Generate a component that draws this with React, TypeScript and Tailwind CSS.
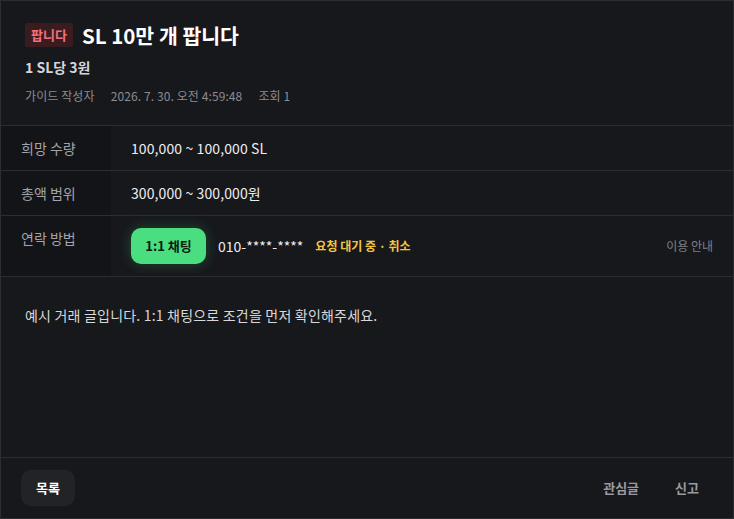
import React from "react";

export default function App() {
  return (
    <div
      className="w-[734px] h-[519px] bg-[#17181c] text-white border border-[#2c2d31] flex flex-col"
      style={{ fontFamily: '"Noto Sans CJK KR", "Noto Sans", sans-serif' }}
    >
      <div className="px-6 pt-[22px] pb-[21px] border-b border-[#2c2d31]">
        <div className="flex items-center gap-[9px]">
          <span className="h-6 px-[6px] flex items-center rounded-[2px] bg-[#3a1c20] text-[#f0717a] text-[13px] font-bold">
            팝니다
          </span>
          <h1 className="text-[20.5px] font-bold leading-none text-white">SL 10만 개 팝니다</h1>
        </div>
        <div className="mt-[11px] text-[14px] font-bold text-[#d6d6d8] leading-[18px]">1 SL당 3원</div>
        <div className="mt-[12px] flex gap-4 text-[12px] tracking-[0.1px] text-[#8b8c91] leading-[16px]">
          <span>가이드 작성자</span>
          <span>2026. 7. 30. 오전 4:59:48</span>
          <span>조회 1</span>
        </div>
      </div>

      <div className="flex border-b border-[#2c2d31] h-[45px]">
        <div className="w-[110px] bg-[#131417] flex items-center pl-5 text-[14px] text-[#a3a4a8]">희망 수량</div>
        <div className="flex-1 flex items-center pl-5 text-[14px] tracking-[0.1px] text-[#eeeeef]">100,000 ~ 100,000 SL</div>
      </div>
      <div className="flex border-b border-[#2c2d31] h-[45px]">
        <div className="w-[110px] bg-[#131417] flex items-center pl-5 text-[14px] text-[#a3a4a8]">총액 범위</div>
        <div className="flex-1 flex items-center pl-5 text-[14px] tracking-[0.1px] text-[#eeeeef]">300,000 ~ 300,000원</div>
      </div>
      <div className="flex border-b border-[#2c2d31] h-[61px]">
        <div className="w-[110px] bg-[#131417] pl-5 pt-[12px] text-[14px] text-[#a3a4a8]">연락 방법</div>
        <div className="flex-1 flex items-center pl-5 pr-5">
          <button className="h-9 w-[75px] rounded-[10px] bg-[#4ade80] text-[#0c1a10] text-[13px] font-bold shadow-[0_0_14px_rgba(74,222,128,0.25)]">
            1:1 채팅
          </button>
          <span className="ml-3 text-[14px] text-[#eeeeef]">010-****-****</span>
          <span className="ml-3 text-[12px] font-bold text-[#f5c542]">요청 대기 중 · 취소</span>
          <span className="ml-auto text-[12px] text-[#7f8085]">이용 안내</span>
        </div>
      </div>

      <div className="flex-1 px-6 pt-[28px] text-[14px] tracking-[0.2px] text-[#d8d8da] border-b border-[#2c2d31]">
        예시 거래 글입니다. 1:1 채팅으로 조건을 먼저 확인해주세요.
      </div>

      <div className="h-[60px] flex items-center pl-5 pr-[22px]">
        <button className="h-9 w-[54px] rounded-[10px] bg-[#222327] text-[13px] font-bold text-white">목록</button>
        <button className="ml-auto h-9 px-3 text-[13px] font-bold text-[#9a9ba0]">관심글</button>
        <button className="ml-3 h-9 px-3 text-[13px] font-bold text-[#9a9ba0]">신고</button>
      </div>
    </div>
  );
}
